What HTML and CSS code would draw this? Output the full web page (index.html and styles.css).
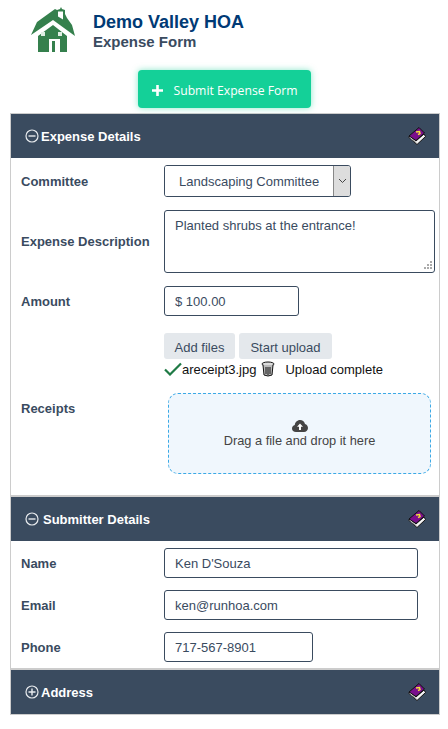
FILE: index.html
```html
<!DOCTYPE html>
<html lang="en">
<head>
    <meta charset="UTF-8">
    <meta name="viewport" content="width=device-width, initial-scale=1.0">
    <title>Expense Form</title>
    <link rel="stylesheet" href="styles.css">
</head>
<body>

    <svg width="0" height="0" class="defs">
        <symbol id="book" viewBox="0 0 18 18">
            <path d="M0.5 10 L9 17.5 L17.5 9.5 L16 7 L8 14 L2 9 Z" fill="#f4f4f4" stroke="#111" stroke-width="1"/>
            <path d="M1 9 L11 0.5 L16.5 6 L8 13.5 Z" fill="#7a0f8c" stroke="#111" stroke-width="1"/>
            <path d="M8 5 L11.5 4.5 L12 6.5 L10 7.5" fill="none" stroke="#f4e23a" stroke-width="1.5"/>
            <path d="M2.5 11.5 L8.5 16" stroke="#888" stroke-width="1"/>
        </symbol>
        <symbol id="minus-circle" viewBox="0 0 14 14">
            <circle cx="7" cy="7" r="6" fill="none" stroke="#e8ebee" stroke-width="1.2"/>
            <path d="M3.5 7 H10.5" stroke="#e8ebee" stroke-width="1.4"/>
        </symbol>
        <symbol id="plus-circle" viewBox="0 0 14 14">
            <circle cx="7" cy="7" r="6" fill="none" stroke="#e8ebee" stroke-width="1.2"/>
            <path d="M3.5 7 H10.5 M7 3.5 V10.5" stroke="#e8ebee" stroke-width="1.4"/>
        </symbol>
    </svg>

    <header class="page-header">
        <svg class="logo" width="44" height="44" viewBox="0 0 44 44">
            <path fill="#35804d" d="M0 27 L6 14 L24 1 L26 2 L29 1 L30 -1 L31 1 L34 2 L34 6 L36 10 L41 17 L44 28 L22 12 Z"/>
            <path fill="#fff" d="M27 3.5 L32 3.5 L32 11.5 L27 8.5 Z"/>
            <path fill="#35804d" d="M7 28 L22 17 L36 28 L36 44 L29 44 L29 31 L18 31 L18 44 L7 44 Z"/>
            <rect x="21" y="33" width="3" height="11" fill="#35804d"/>
            <rect x="10" y="24" width="4" height="4" fill="#dfeee4"/>
            <rect x="27" y="24" width="4" height="4" fill="#dfeee4"/>
        </svg>
        <div>
            <h1>Demo Valley HOA</h1>
            <h2>Expense Form</h2>
        </div>
    </header>

    <div class="submit-wrap">
        <button class="submit-btn" type="button">
            <svg width="13" height="13" viewBox="0 0 13 13"><path d="M6.5 1 V12 M1 6.5 H12" stroke="#fff" stroke-width="2.6"/></svg>
            Submit Expense Form
        </button>
    </div>

    <div class="panel">
        <div class="panel-head">
            <svg class="toggle" width="14" height="14"><use href="#minus-circle"/></svg>
            <span>Expense Details</span>
            <svg class="help" width="18" height="18"><use href="#book"/></svg>
        </div>
        <div class="panel-body expense-body">
            <div class="row row-committee">
                <label>Committee</label>
                <div class="select-box">
                    <select><option>Landscaping Committee</option></select>
                    <span class="select-arrow">
                        <svg width="9" height="6" viewBox="0 0 9 6"><path d="M1 1 L4.5 4.5 L8 1" fill="none" stroke="#444" stroke-width="1"/></svg>
                    </span>
                </div>
            </div>
            <div class="row row-desc">
                <label>Expense Description</label>
                <div class="textarea-box">
                    <textarea>Planted shrubs at the entrance!</textarea>
                    <svg class="grip" width="9" height="9" viewBox="0 0 9 9">
                        <path fill="#aaa" d="M7 0h2v2H7z M4 3h2v2H4z M7 3h2v2H7z M1 6h2v2H1z M4 6h2v2H4z M7 6h2v2H7z"/>
                    </svg>
                </div>
            </div>
            <div class="row row-amount">
                <label>Amount</label>
                <input class="w-amount" type="text" value="$ 100.00">
            </div>
            <div class="row row-receipts">
                <label>Receipts</label>
                <div>
                    <div class="upload-btns">
                        <button type="button">Add files</button>
                        <button type="button">Start upload</button>
                    </div>
                    <div class="file-line">
                        <svg width="18" height="14" viewBox="0 0 18 14"><path d="M1 7.5 L6 12.5 L17 1.5" fill="none" stroke="#1f7a45" stroke-width="2.2"/></svg>
                        <span class="file-name">areceipt3.jpg</span>
                        <svg class="trash" width="14" height="16" viewBox="0 0 14 16">
                            <ellipse cx="7" cy="3" rx="6" ry="2" fill="#ddd" stroke="#111"/>
                            <path d="M2 4 L3 14 Q7 16 11 14 L12 4" fill="#bbb" stroke="#111"/>
                            <path d="M5 6 V13 M7 6 V14 M9 6 V13" stroke="#111" stroke-width="1"/>
                        </svg>
                        <span class="file-status">Upload complete</span>
                    </div>
                    <div class="dropzone">
                        <svg width="16" height="12" viewBox="0 0 16 12">
                            <path fill="#444" d="M4 12 C1.5 12 0 10.4 0 8.4 C0 6.6 1.2 5.3 2.8 5 C3 2.4 5.2 0 8 0 C10.4 0 12.4 1.6 13 3.9 C14.8 4.4 16 6 16 8 C16 10.3 14.3 12 12 12 Z"/>
                            <path fill="#fff" d="M8 3.5 L11 6.8 H9 V10 H7 V6.8 H5 Z"/>
                        </svg>
                        <span>Drag a file and drop it here</span>
                    </div>
                </div>
            </div>
        </div>

        <div class="panel-head head-divided">
            <svg class="toggle" width="14" height="14"><use href="#minus-circle"/></svg>
            <span class="head-wide">Submitter Details</span>
            <svg class="help" width="18" height="18"><use href="#book"/></svg>
        </div>
        <div class="panel-body submitter-body">
            <div class="row">
                <label>Name</label>
                <input class="w-long" type="text" value="Ken D'Souza">
            </div>
            <div class="row">
                <label>Email</label>
                <input class="w-long" type="text" value="ken@runhoa.com">
            </div>
            <div class="row">
                <label>Phone</label>
                <input class="w-phone" type="text" value="717-567-8901">
            </div>
        </div>

        <div class="panel-head head-divided">
            <svg class="toggle" width="14" height="14"><use href="#plus-circle"/></svg>
            <span>Address</span>
            <svg class="help" width="18" height="18"><use href="#book"/></svg>
        </div>
    </div>

</body>
</html>
```

FILE: styles.css
```css
body {
    font-family: "Liberation Sans", Arial, sans-serif;
    font-size: 13px;
    color: #3a4b5f;
    margin: 0;
    padding: 8px 8px 14px 10px;
    background: #fff;
}
.defs {
    display: block;
    height: 0;
}
.logo {
    overflow: visible;
}
.page-header {
    display: flex;
    align-items: center;
    gap: 18px;
    padding-left: 21px;
    height: 44px;
}
.page-header h1 {
    margin: 2px 0 0;
    font-size: 18px;
    line-height: 21px;
    color: #003a75;
}
.page-header h2 {
    margin: 0;
    font-size: 15px;
    line-height: 18px;
    color: #3a4b5f;
}
.submit-wrap {
    display: flex;
    justify-content: center;
    margin: 18px 2px 5px 0;
}
.submit-btn {
    display: flex;
    align-items: center;
    gap: 10px;
    width: 173px;
    height: 38px;
    padding: 2px 0 0 13px;
    border: none;
    border-radius: 4px;
    background-color: #14d098;
    box-shadow: 0 0 6px rgba(20, 208, 152, 0.5);
    color: #fff;
    font-family: "Open Sans", sans-serif;
    font-size: 12.2px;
}
.panel {
    width: 428px;
    border: 1px solid #ccc;
}
.panel-head {
    display: flex;
    align-items: center;
    height: 44px;
    padding: 0 13px 0 14px;
    background-color: #3a4b5f;
    color: #fff;
    font-weight: bold;
    font-size: 13px;
}
.head-divided {
    border-top: 2px solid #ccc;
}
.toggle {
    margin-right: 2px;
}
.head-wide {
    margin-left: 2px;
}
.help {
    margin-left: auto;
}
.panel-body {
    padding: 0 4px 0 10px;
}
.expense-body {
    padding-top: 7px;
    height: 330px;
}
.submitter-body {
    padding-top: 7px;
    padding-bottom: 6px;
    display: flex;
    flex-direction: column;
    gap: 12px;
}
.row {
    display: grid;
    grid-template-columns: 143px 1fr;
    align-items: center;
}
.row label {
    font-weight: bold;
}
.row input,
.row textarea,
.row select {
    font-family: "Liberation Sans", Arial, sans-serif;
    font-size: 13px;
    color: #3a4b5f;
}
.row input,
.row textarea {
    box-sizing: border-box;
    height: 30px;
    padding: 0 10px;
    border: 1px solid #3a4b5f;
    border-radius: 3px;
    outline: none;
}
.w-amount {
    width: 135px;
}
.w-long {
    width: 254px;
}
.w-phone {
    width: 149px;
}
.select-box {
    display: flex;
    box-sizing: border-box;
    width: 187px;
    height: 32px;
    border: 1px solid #3a4b5f;
    border-radius: 3px;
    overflow: hidden;
}
.select-box select {
    flex: 1;
    min-width: 0;
    padding: 0 0 0 14px;
    border: none;
    outline: none;
    background: #fff;
    appearance: none;
}
.select-arrow {
    display: flex;
    align-items: center;
    justify-content: center;
    width: 16px;
    background-color: #ddd;
    border-left: 1px solid #888;
}
.row-desc {
    margin-top: 13px;
}
.textarea-box {
    position: relative;
    width: 271px;
    height: 63px;
}
.textarea-box textarea {
    display: block;
    width: 271px;
    height: 63px;
    padding: 7px 10px;
    resize: none;
}
.grip {
    position: absolute;
    right: 3px;
    bottom: 3px;
}
.row-amount {
    margin-top: 13px;
}
.row-receipts {
    margin-top: 17px;
    align-items: start;
}
.row-receipts label {
    margin-top: 68px;
}
.upload-btns {
    display: flex;
    gap: 4px;
}
.upload-btns button {
    width: 71px;
    height: 26px;
    padding: 2px 0 0;
    border: none;
    border-radius: 3px;
    background-color: #e4e8ec;
    color: #3a4b5f;
    font-family: "Liberation Sans", Arial, sans-serif;
    font-size: 13px;
}
.upload-btns button + button {
    width: 93px;
}
.file-line {
    display: flex;
    align-items: center;
    height: 18px;
    margin-top: 1px;
    color: #111;
}
.trash {
    margin-left: 5px;
}
.file-status {
    margin-left: 10px;
}
.dropzone {
    display: flex;
    flex-direction: column;
    align-items: center;
    justify-content: center;
    box-sizing: border-box;
    width: 263px;
    height: 81px;
    margin: 15px 0 0 4px;
    border: 1px dashed #3ba9e6;
    border-radius: 10px;
    background-color: #f0f7fd;
    color: #444;
    font-size: 12.8px;
    gap: 1px;
}
```
